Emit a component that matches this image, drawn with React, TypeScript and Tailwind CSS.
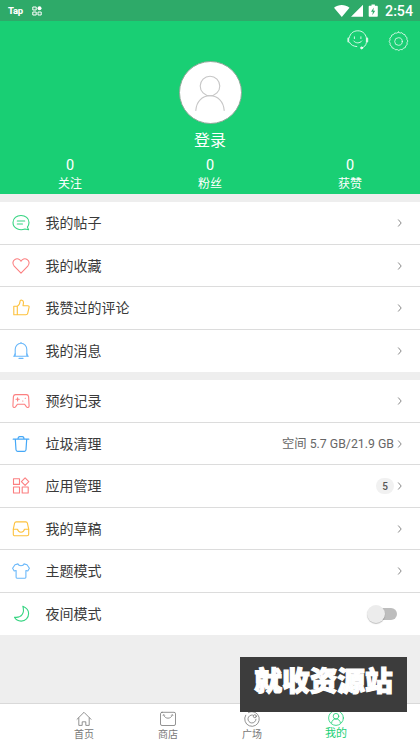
import React from "react";

interface MenuItem {
  label: string;
  color: string;
  icon: React.ReactNode;
  extra?: React.ReactNode;
  toggle?: boolean;
}

interface IconProps {
  className?: string;
  size?: number;
  stroke?: number;
  children: React.ReactNode;
}

const Icon = ({ className = "", size = 18, stroke = 1.1, children }: IconProps) => (
  <svg
    className={`block shrink-0 ${className}`}
    width={size}
    height={size}
    viewBox={`0 0 ${size} ${size}`}
    fill="none"
    stroke="currentColor"
    strokeWidth={stroke}
    strokeLinecap="round"
    strokeLinejoin="round"
  >
    {children}
  </svg>
);

const posts: MenuItem[] = [
  {
    label: "我的帖子",
    color: "text-[#35d481]",
    icon: (
      <>
        <path d="M16.6 15.8 12.9 15C8 17 1 14.7 1 8.5 1 4.3 4.6 1.5 9 1.5s8 2.8 8 7c0 2-.6 3.3-1.6 4.6z" />
        <path d="M5.3 7h7.4M5.3 10h5.2" />
      </>
    ),
  },
  {
    label: "我的收藏",
    color: "text-[#fc7f80]",
    icon: <path d="M9 16.2 2.2 9.2C.2 7 .6 3.6 2.9 2.4 5.2 1.1 7.8 2 9 4.2c1.2-2.2 3.8-3.1 6.1-1.8 2.3 1.2 2.7 4.6.7 6.8z" />,
  },
  {
    label: "我赞过的评论",
    color: "text-[#fdc13d]",
    icon: (
      <path d="M1.8 7.2h3.5v8.6H1.8zM5.3 7.2C7.6 6.1 8 4.2 8.1 2c.1-1.4 3.6-1.3 3.4 1.7l-.5 3h4.8c1 0 1.5.7 1.3 1.5l-1.4 6.2c-.2.9-.8 1.4-1.7 1.4H5.3" />
    ),
  },
  {
    label: "我的消息",
    color: "text-[#6ab8fa]",
    icon: (
      <>
        <path d="M2 14.2h14M3.2 14V7.6C3.2 4 5.7 1.3 9 1.3S14.8 4 14.8 7.6V14M7 16.4h4M8.6.8h.8" />
        <path d="M3.2 11.8 2 14.2M14.8 11.8l1.2 2.4" />
      </>
    ),
  },
];

const tools: MenuItem[] = [
  {
    label: "预约记录",
    color: "text-[#fc7f80]",
    icon: (
      <>
        <path d="M3.6 2.6h10.8c1.5 0 2 .6 2.2 2l.5 9.4c.1 1.6-1.8 1.9-2.6.9L12.6 12.2H5.4l-1.9 2.7C2.7 15.9.8 15.6.9 14l.5-9.4c.2-1.4.7-2 2.2-2z" />
        <path d="M4 7.3h3.2M5.6 5.7v3.2M10.7 9h.2M13.2 6.2h.2" />
      </>
    ),
  },
  {
    label: "垃圾清理",
    color: "text-[#45a8f7]",
    icon: (
      <path
        strokeWidth="1.2"
        d="M1.2 4.2h15.6M3.3 4.2l.7 10.6c.1 1 .6 1.5 1.6 1.5h6.8c1 0 1.5-.5 1.6-1.5l.7-10.6M6 4c0-1.5.6-2.3 1.7-2.3h2.6c1.1 0 1.7.8 1.7 2.3"
      />
    ),
    extra: <span className="text-[12.3px] text-[#666]">空间 5.7 GB/21.9 GB</span>,
  },
  {
    label: "应用管理",
    color: "text-[#fc7f80]",
    icon: <path d="M1.5 1.7h6v5.7h-6zM1.5 10h6v6h-6zM10.2 10h6v6h-6zM13.1.8l3.7 3.8-3.7 3.8-3.7-3.8z" />,
    extra: (
      <span className="flex h-4 w-[18px] items-center justify-center rounded-full bg-[#f1f1f1] text-[10px] font-medium text-[#555]">
        5
      </span>
    ),
  },
  {
    label: "我的草稿",
    color: "text-[#fdc13d]",
    icon: (
      <>
        <path d="M4.2 1.9h9.6c1 0 1.4.5 1.6 1.3l1.3 6v5c0 1-.6 1.6-1.6 1.6H2.9c-1 0-1.6-.6-1.6-1.6v-5l1.3-6c.2-.8.6-1.3 1.6-1.3z" />
        <path d="M1.4 9.2h4.1c.4 1.9 1.6 3 3.5 3s3.1-1.1 3.5-3h4.1" />
      </>
    ),
  },
  {
    label: "主题模式",
    color: "text-[#6ab8fa]",
    icon: <path d="M6 1.9 3 2.7.6 6.3 2.2 9l1.9-.5v6.8c0 .6.3.9.9.9h8c.6 0 .9-.3.9-.9V8.5l1.9.5 1.6-2.7L15 2.7l-3-.8C11.5 4.3 6.5 4.3 6 1.9z" />,
  },
  {
    label: "夜间模式",
    color: "text-[#35d481]",
    icon: <path d="M10.8 1.2c3.4 1.4 5.8 3.7 5.8 7.2 0 4.4-3.1 7.7-7.4 7.7-3.3 0-5.6-1.5-6.7-3.8 3.5.4 6.2-.5 7.7-2.8 1.5-2.3 1.6-5.3.6-8.3z" />,
    toggle: true,
  },
];

const stats = ["关注", "粉丝", "获赞"];

const tabs = [
  {
    label: "首页",
    icon: <path d="M1 8.3 8 1.3l7 7M2.8 7v7.4h3.4v-3.6h3.6v3.6h3.4V7" />,
  },
  {
    label: "商店",
    icon: (
      <>
        <rect x=".5" y="1.3" width="15" height="13.2" rx="1.5" />
        <path d="M3.7 4.2C5 8.3 11 8.3 12.3 4.2M3.2 4.2l.6-.7.7.7M11.5 4.2l.7-.7.6.7" />
      </>
    ),
  },
  {
    label: "广场",
    icon: (
      <>
        <path d="M1.7 4.2A7.3 7.3 0 1 0 8 .7c-1.4 0-2.6.3-3.6.9" />
        <path d="M8.5 4A4 4 0 1 0 12 8.2" />
        <circle cx="10.8" cy="5.2" r="1.5" />
      </>
    ),
  },
  {
    label: "我的",
    icon: (
      <>
        <circle cx="8" cy="8" r="7.4" />
        <circle cx="8" cy="6.2" r="2.8" />
        <path d="M3.6 12.8c.2-2.3 1.9-3.8 4.4-3.8s4.2 1.5 4.4 3.8" />
      </>
    ),
    active: true,
  },
];

const Row = ({ item, last }: { item: MenuItem; last: boolean }) => (
  <div
    className={`flex h-[42.5px] items-center pl-3 pt-[0.5px] ${item.toggle ? "pr-[23px]" : "pr-[17px]"} ${last ? "" : "border-b border-[#dcdcdc]"}`}
  >
    <Icon className={item.color}>{item.icon}</Icon>
    <span className="ml-[15.5px] flex-1 text-[14px] leading-5 text-[#3a3a3a]">{item.label}</span>
    {item.toggle ? (
      <div className="relative h-3 w-[26px] rounded-full bg-[#bdbdbd]">
        <div className="absolute -left-1 -top-[3px] size-[18px] rounded-full bg-[#ececec] shadow-[0_1px_1px_rgba(0,0,0,0.25)]" />
      </div>
    ) : (
      <div className="flex items-center gap-[3px]">
        {item.extra}
        <svg className="block" width="6" height="10" viewBox="0 0 6 10" fill="none" stroke="#888" strokeWidth="1">
          <path d="M1.2 1.5 4.2 5 1.2 8.5" />
        </svg>
      </div>
    )}
  </div>
);

const StatusBar = () => (
  <div className="flex h-[21px] items-center bg-[#2eaa69] pl-2 pr-[7px] text-white">
    <span className="text-[9.5px] font-extrabold leading-none tracking-[-0.3px]">Tap</span>
    <svg className="ml-[9px] block" width="10" height="10" viewBox="0 0 10 10" fill="none" stroke="#fff" strokeWidth="1">
      <path d="M.8 1h3.4v3H.8zM.8 6h3.4v3H.8zM6 6h3.2v3H6z" />
      <circle cx="7.5" cy="2.3" r="2" fill="#fff" stroke="none" />
    </svg>
    <svg className="ml-auto mr-[6px] block" width="45" height="14" viewBox="0 0 45 14" fill="#fff">
      <path d="M0 3.8C4.5 0 11 0 15.5 3.8L7.8 13zM17 12.8h12V.8zM42.8 1.8h-1.9V.6h-3.4v1.2h-1.8c-.6 0-1 .4-1 1v9c0 .6.4 1 1 1h7.1c.6 0 1-.4 1-1v-9c0-.6-.4-1-1-1z" />
      <path d="m39.8 3.6-2.8 4.2h1.9l-.6 3.4 2.9-4.4h-1.9z" fill="#2eaa69" />
    </svg>
    <span className="pt-px text-[14.2px] font-medium leading-none">2:54</span>
  </div>
);

const Header = () => (
  <header className="h-[173px] bg-[#19cf74] text-white">
    <div className="flex h-10 items-center justify-end gap-[18px] pr-[11px]">
      <Icon size={24} stroke={1} className="text-white/80">
        <path d="M3.2 8.8C4.2 4.3 7.4 1.8 11.8 1.8s7.5 2.5 8.6 7v4.7c-.4 2.8-2.1 4.8-4.4 5.2" />
        <path d="M2.3 9.4v3.2M21.3 9.4v3.2" strokeWidth="1.8" />
        <path d="M3.4 13.2c1.3 2.8 3.8 4 7.4 4.4M8.4 7.8v1.8M14.9 7.8v1.8M7.7 12c1.9 2.6 6.2 2.6 8.1 0" />
        <circle cx="15.6" cy="18.9" r="1" fill="currentColor" />
      </Icon>
      <Icon size={21} stroke={0.9} className="text-white/80">
        <path d="M10.5 1.2Q12 2.8 13.9 1.7Q14.8 3.7 16.9 3.6Q17 5.8 19 6.5Q18.3 8.6 19.9 10Q18.4 11.6 19.2 13.6Q17.2 14.4 17.3 16.6Q15.1 16.6 14.3 18.7Q12.3 17.8 10.8 19.5Q9.3 17.9 7.3 18.8Q6.4 16.9 4.2 17Q4.1 14.8 2 14Q2.8 12 1.2 10.6Q2.7 9 1.8 7Q3.8 6.2 3.8 4Q6 4 6.7 2Q8.7 2.8 10.5 1.2Z" />
        <circle cx="10.5" cy="10.5" r="3.8" />
      </Icon>
    </div>
    <div className="mx-auto flex size-[63px] items-center justify-center rounded-full border border-[#8fa898] bg-white text-[#c6c6c6]">
      <Icon size={38} stroke={1.1}>
        <circle cx="19" cy="12" r="9.8" />
        <path d="M4.8 36.4c.6-8.9 6.2-14.6 14.2-14.6s13.6 5.7 14.2 14.6" />
      </Icon>
    </div>
    <div className="mt-[5px] text-center text-[16px] leading-6">登录</div>
    <div className="mt-1 grid grid-cols-3">
      {stats.map((label) => (
        <div key={label} className="text-center">
          <div className="text-[14.5px] leading-[18px]">0</div>
          <div className="text-[12px] leading-[18px]">{label}</div>
        </div>
      ))}
    </div>
  </header>
);

const App = () => {
  return (
    <div className="relative flex h-[746px] w-[420px] flex-col overflow-hidden bg-[#eee] font-[Roboto,'Noto_Sans_CJK_SC',sans-serif]">
      <StatusBar />
      <Header />
      <main className="flex-1">
        <section className="mt-2 bg-white">
          {posts.map((item, i) => (
            <Row key={item.label} item={item} last={i === posts.length - 1} />
          ))}
        </section>
        <section className="mt-[8.4px] bg-white">
          {tools.map((item, i) => (
            <Row key={item.label} item={item} last={i === tools.length - 1} />
          ))}
        </section>
      </main>
      <nav className="flex h-[43px] shrink-0 justify-center border-t border-[#d9d9d9] bg-white pt-[7px]">
        {tabs.map((tab) => (
          <div
            key={tab.label}
            className={`flex w-[84px] flex-col items-center ${tab.active ? "-mt-px text-[#19cf74]" : "text-[#777]"}`}
          >
            <Icon size={16} stroke={0.8}>{tab.icon}</Icon>
            <span className={tab.active ? "pt-px text-[11px] leading-[14px]" : "pt-px text-[10px] leading-[14px]"}>
              {tab.label}
            </span>
          </div>
        ))}
      </nav>
      <div className="absolute left-[240px] top-[657px] flex h-[55px] w-[167px] items-center justify-center bg-[#3c3c3c] pb-[5px] text-[27.7px] font-black leading-none text-white [-webkit-text-stroke:1.2px_#fff]">
        就收资源站
      </div>
    </div>
  );
};

export default App;
